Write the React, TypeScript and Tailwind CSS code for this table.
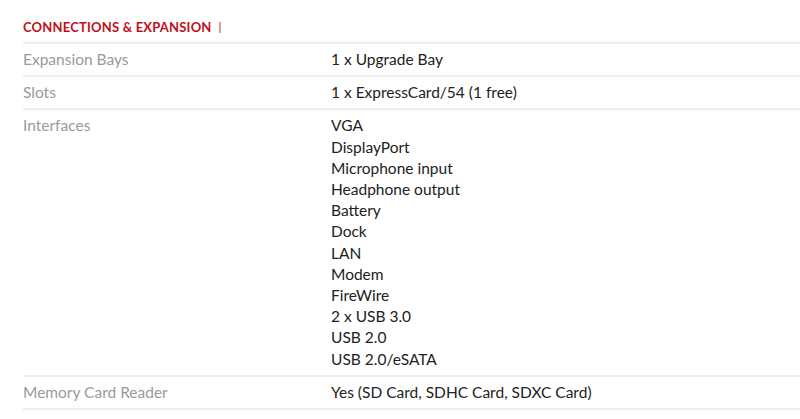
const rows: { label: string; values: string[] }[] = [
  { label: 'Expansion Bays', values: ['1 x Upgrade Bay'] },
  { label: 'Slots', values: ['1 x ExpressCard/54 (1 free)'] },
  {
    label: 'Interfaces',
    values: [
      'VGA',
      'DisplayPort',
      'Microphone input',
      'Headphone output',
      'Battery',
      'Dock',
      'LAN',
      'Modem',
      'FireWire',
      '2 x USB 3.0',
      'USB 2.0',
      'USB 2.0/eSATA',
    ],
  },
  { label: 'Memory Card Reader', values: ['Yes (SD Card, SDHC Card, SDXC Card)'] },
];

export default function App() {
  return (
    <div className="w-[800px] h-[419px] bg-white pl-[23px] font-['Lato','Liberation_Sans',sans-serif] overflow-hidden">
      <div className="pt-[18px] pb-[6px] flex items-center gap-[7px] text-[13px] leading-[18px]">
        <span className="font-bold text-[#c0101a] tracking-[0.2px]">CONNECTIONS &amp; EXPANSION</span>
        <span className="text-[#c0101a] text-[12px]">|</span>
      </div>
      <div className="border-b-2 border-[#eeeeee]">
        {rows.map((row) => (
          <div key={row.label} className="flex border-t-2 border-[#eeeeee] py-[5px] text-[15.5px] leading-[21.2px]">
            <div className="w-[308px] text-[#9a9a9a]">{row.label}</div>
            <div className="flex-1 text-[#222222]">
              {row.values.map((v) => (
                <div key={v}>{v}</div>
              ))}
            </div>
          </div>
        ))}
      </div>
    </div>
  );
}
